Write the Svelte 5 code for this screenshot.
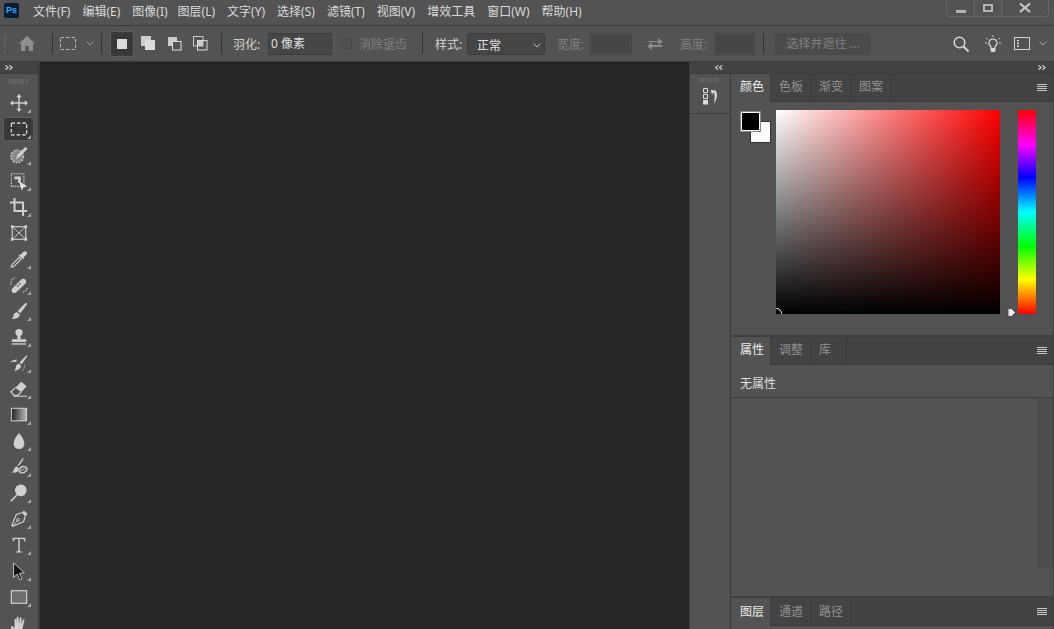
<script lang="ts">
  const menus = ['文件(F)', '编辑(E)', '图像(I)', '图层(L)', '文字(Y)', '选择(S)', '滤镜(T)', '视图(V)', '增效工具', '窗口(W)', '帮助(H)'];

  const c = '#d0d0d0';
  const tools = [
    { more: true, svg: `<path d="M10 1.5v17M1.5 10h17" stroke="${c}" stroke-width="1.6" fill="none"/><path d="M10 0l3 3.500H7zM10 20l3-3.500H7zM0 10l3.500-3v6zM20 10l-3.500-3v6z" fill="${c}"/>` },
    { more: true, active: true, svg: `<rect x="1.500" y="3.500" width="17" height="13" fill="none" stroke="#eaeaea" stroke-width="1.300" stroke-dasharray="4 2.200"/>` },
    { more: true, svg: `<circle cx="8" cy="11.500" r="7" fill="#8a8a8a" stroke="${c}" stroke-width="1.500" stroke-dasharray="2 1.500"/><path d="M6.500 15l2-5.500 8.500-8.500 2.500 2-8 8.500z" fill="${c}"/>` },
    { more: true, svg: `<rect x="1.500" y="2" width="14" height="14" fill="none" stroke="#ddd" stroke-width="1.200" stroke-dasharray="1.500 1.300"/><path d="M5 5h7v7H9V8H5z" fill="${c}"/><path d="M10 10l9 6-4 1-2 3.500z" fill="#e0e0e0"/>` },
    { more: true, svg: `<path d="M5 0v14.500h14M0 5h14.500v15" fill="none" stroke="${c}" stroke-width="2.200"/>` },
    { more: false, svg: `<rect x="2.500" y="3" width="15" height="14" fill="none" stroke="${c}" stroke-width="1.300"/><path d="M2.500 3l15 14M17.500 3l-15 14" stroke="${c}"/><path d="M1 1.500h3v3H1zM16 1.500h3v3h-3zM1 15.500h3v3H1zM16 15.500h3v3h-3z" fill="${c}"/>` },
    { more: true, svg: `<path d="M2 16.500L10.500 8l2 2-8.500 8.500-2.500.5z" fill="none" stroke="${c}" stroke-width="1.300"/><path d="M9.500 5.500l2.500-.5 3-3q2-1.500 3.200 0t0 3L15.500 8l-.5 2.500z" fill="${c}"/>` },
    { more: true, svg: `<path d="M2.500 14L12.500 4q2.500-2 4.500 0t0 4.500L7 18q-2.500 2-4.500 0t0-4z" fill="${c}"/><circle cx="8.500" cy="11" r="1" fill="#535353"/><circle cx="11" cy="9" r="1" fill="#535353"/><path d="M1 10Q.5 4 6 1.500M14.500 18q3.500-1 5-5" fill="none" stroke="${c}" stroke-width="1.200" stroke-dasharray="1.500 1.200"/>` },
    { more: true, svg: `<path d="M18.500 1q1 .5.500 1.500L11.500 12.500 8.500 10 17 1.500z" fill="${c}"/><path d="M7.500 11l3.500 3q-1 5-9.500 5 3-2 2.500-4.500.5-2.500 3.500-3.500z" fill="${c}"/>` },
    { more: true, svg: `<circle cx="10" cy="5" r="4" fill="${c}"/><path d="M8.500 8h3l.5 4.500H8z" fill="${c}"/><path d="M2 12.500h16V15.500H2z" fill="${c}"/><path d="M2 17h16v1.500H2z" fill="${c}"/>` },
    { more: true, svg: `<path d="M18.500 1.500q.8.500.5 1.200L13 11.500 10.500 9.500zM9.500 10.500l3 2.500q-1 5-8 5.500 2.500-2 2-4.500.5-2.500 3-3.500z" fill="${c}"/><path d="M0 9.500q3-4 7.500-3L7 9q-3-1-7 .5z" fill="${c}"/><path d="M16 12q1 4-3 6.500" fill="none" stroke="${c}" stroke-dasharray="1.500 1"/>` },
    { more: true, svg: `<path d="M12.500 2l6 5-6 6.500L6 8.500z" fill="${c}"/><path d="M6 8.500L1 13l3.500 4h4l4-3.500" fill="none" stroke="${c}" stroke-width="1.300"/><path d="M4 18h15" stroke="${c}" stroke-width="1.200"/>` },
    { more: true, svg: `<defs><linearGradient id="gr"><stop offset="0" stop-color="#222"/><stop offset="1" stop-color="#bbb"/></linearGradient></defs><rect x="1.500" y="2.500" width="17" height="14" fill="url(#gr)" stroke="#ddd"/>` },
    { more: true, svg: `<path d="M10 1q6 7 6 12a6 6 0 01-12 0Q4 8 10 1z" fill="${c}"/>` },
    { more: true, svg: `<path d="M14 0q1.500.5 1 1.500L10.500 8 8 9zM7 9.500q3.500 1 2.500 4-1.500 3.500-8 2.500 2.500-1 3-3.500.5-2 2.500-3z" fill="${c}"/><ellipse cx="14.500" cy="13" rx="4.500" ry="3.300" transform="rotate(-25 14.500 13)" fill="none" stroke="${c}" stroke-width="1.600"/><path d="M11 15l7-4.500" stroke="${c}"/>` },
    { more: true, svg: `<circle cx="12" cy="7" r="6.500" fill="${c}"/><path d="M8 12L1 19" stroke="${c}" stroke-width="1.800"/>` },
    { more: true, svg: `<path d="M13 3L7 5 2 17l1 1L15 13l2-6" fill="none" stroke="${c}" stroke-width="1.300"/><path d="M13 3l2.500-2.500 4 4L17 7z" fill="${c}"/><path d="M3 18l5-6" stroke="${c}"/><circle cx="9" cy="11" r="1.600" fill="none" stroke="${c}"/>` },
    { more: true, svg: `<path d="M3 2h14v4.500h-.8Q16 3.200 13.500 3.200h-2.700V16q0 1.300 2.500 1.300v1H6.700v-1q2.500 0 2.500-1.300V3.200H6.500Q4 3.200 3.800 6.500H3z" fill="${c}"/>` },
    { more: true, svg: `<path d="M4 1l12 11-5.500.5 3 6.500-2.500 1-3-6.500L4 17z" fill="#111" stroke="${c}" stroke-width="1"/>` },
    { more: true, svg: `<rect x="1.500" y="3" width="17" height="14" fill="#6e6e6e" stroke="${c}" stroke-width="1.300"/>` },
    { more: false, svg: `<path d="M5 21Q2 17 .5 14q1-1.500 2.500 0L5 15.500V6q1.300-1.500 2 0v5l.5-7.500q1.300-1.300 2 0L10 11l1-7q1.300-1 2 .5L12.500 11l2-5q1.300-.5 1.700 1L14 15q0 3-1 6z" fill="${c}"/>` },
  ];
</script>

{#snippet chevrons(right: boolean)}
  <svg class="dbl" width="8" height="5" viewBox="0 0 9 7" preserveAspectRatio="none">
    <path d={right ? 'M.5.5L3.500 3.500.5 6.500M5 .5L8 3.500 5 6.500' : 'M3.500.5L.5 3.500l3 3M8 .5L5 3.500l3 3'} fill="none" stroke="#e0e0e0" stroke-width="1.400"/>
  </svg>
{/snippet}

<div class="app">
  <header class="menubar">
    <div class="logo">Ps</div>
    <nav class="menus">
      {#each menus as m}
        <span class="menu" class:tight={m === '图像(I)'}>{m}</span>
      {/each}
    </nav>
    <div class="winbtns">
      <div class="win w1"><span class="min"></span></div>
      <div class="win w2"><span class="max"></span></div>
      <div class="win w3">
        <svg width="12" height="10" viewBox="0 0 12 10"><path d="M1 .5l10 8.500M11 .5L1 9" stroke="#c4c4c4" stroke-width="2.200"/></svg>
      </div>
    </div>
  </header>

  <div class="options">
    <div class="grip"></div>
    <svg class="home" width="16" height="15" viewBox="0 0 16 15"><path d="M8 0l8 7.500h-2V15H9.800v-5H6.200v5H2V7.500H0z" fill="#8f8f8f"/></svg>
    <i class="sep s1"></i>
    <svg class="marq" width="17" height="14" viewBox="0 0 17 14"><rect x=".5" y=".5" width="15" height="12" fill="none" stroke="#b4b4b4" stroke-dasharray="3.500 2"/></svg>
    <svg class="chev c1" width="8" height="5" viewBox="0 0 8 5"><path d="M.5.500L4 4 7.500.500" fill="none" stroke="#999"/></svg>
    <i class="sep s2"></i>
    <div class="mode on"><span class="sq"></span></div>
    <svg class="mode-ic m1" width="15" height="15" viewBox="0 0 15 15"><rect width="10" height="10" fill="#ccc"/><rect x="4" y="4" width="10" height="10" fill="#ddd"/></svg>
    <svg class="mode-ic m2" width="14" height="14" viewBox="0 0 14 14"><rect width="9" height="9" fill="#ccc"/><rect x="4.500" y="4.500" width="8.500" height="8.500" fill="#535353" stroke="#ddd"/></svg>
    <svg class="mode-ic m3" width="15" height="15" viewBox="0 0 15 15"><rect x=".5" y=".5" width="9.500" height="9.500" fill="none" stroke="#ccc"/><rect x="4.500" y="4.500" width="9.500" height="9.500" fill="none" stroke="#ddd"/><rect x="4.500" y="4.500" width="5.500" height="5.500" fill="#ccc"/></svg>
    <i class="sep s3"></i>
    <span class="lbl feather">羽化:</span>
    <div class="input fe">0 像素</div>
    <span class="check"></span>
    <span class="lbl dim anti">消除锯齿</span>
    <i class="sep s4"></i>
    <span class="lbl style">样式:</span>
    <div class="select">正常
      <svg width="8" height="5" viewBox="0 0 8 5"><path d="M.5.500L4 4 7.500.500" fill="none" stroke="#c0c0c0"/></svg>
    </div>
    <span class="lbl dim wd">宽度:</span>
    <div class="box bw"></div>
    <svg class="swap" width="16" height="13" viewBox="0 0 16 13"><path d="M1 4h10V1l5 3.500L11 8V5H1zM15 8H5V5L0 9.500 5 13v-3h10z" fill="#8a8a8a"/></svg>
    <span class="lbl dim ht">高度:</span>
    <div class="box bh"></div>
    <i class="sep s5"></i>
    <div class="mask">选择并遮住 ...</div>
    <svg class="search" width="16" height="16" viewBox="0 0 16 16"><circle cx="6.500" cy="6.500" r="5.300" fill="none" stroke="#d4d4d4" stroke-width="1.500"/><path d="M10.500 10.500L15.500 15.500" stroke="#d4d4d4" stroke-width="2"/></svg>
    <svg class="bulb" width="16" height="18" viewBox="0 0 16 18"><path d="M8 4a4 4 0 00-2 7.500V15h4v-3.500A4 4 0 008 4z" fill="none" stroke="#d4d4d4" stroke-width="1.200"/><path d="M6 13h4v4H6z" fill="#d4d4d4"/><path d="M8 0v2M1 3l1.500 1.300M15 3l-1.500 1.300M0 8h2M14 8h2" stroke="#d4d4d4"/></svg>
    <svg class="work" width="16" height="13" viewBox="0 0 16 13"><rect x=".5" y=".5" width="15" height="12" fill="none" stroke="#d4d4d4"/><path d="M3 3h2v1.500H3zM3 5.700h2v1.500H3zM3 8.400h2v1.500H3z" fill="#d4d4d4"/></svg>
    <svg class="chev c2" width="8" height="5" viewBox="0 0 8 5"><path d="M.5.500L4 4 7.500.500" fill="none" stroke="#a8a8a8"/></svg>
  </div>

  <div class="main">
    <aside class="toolbar">
      <div class="strip lstrip">{@render chevrons(true)}</div>
      <div class="tgrip"></div>
      <div class="tools">
        {#each tools as t}
          <div class="tool" class:active={t.active}>
            <svg width="18" height="18" viewBox="0 0 20 20">{@html t.svg}</svg>
            {#if t.more}<span class="corner"></span>{/if}
          </div>
        {/each}
      </div>
    </aside>

    <div class="canvas"></div>

    <div class="right">
      <div class="strip rstrip">{@render chevrons(false)}{@render chevrons(true)}</div>
      <div class="right-body">
        <div class="dock">
          <div class="dgrip"></div>
          <div class="dock-btn">
            <svg width="18" height="18" viewBox="0 0 18 18">
              <path d="M2.500 1.500h4v4h-4zM2.500 7.500h4v4h-4z" fill="none" stroke="#dcdcdc"/><path d="M2 13h5v4.500H2z" fill="#dcdcdc"/>
              <path d="M9.500 3l5 .5q3 4.500 0 10.500l-1.500 2q1.500-6 .2-10.500l-1.700.5v2.500z" fill="#dcdcdc"/>
            </svg>
          </div>
        </div>

        <div class="panels">
          <section class="panel color">
            <div class="tabs">
              <span class="tab on">颜色</span><span class="tab">色板</span><span class="tab">渐变</span><span class="tab">图案</span>
              <span class="burger"></span>
            </div>
            <div class="picker">
              <div class="swatches"><span class="bg"></span><span class="fg"></span></div>
              <div class="field"><span class="dot"></span></div>
              <div class="hue-wrap">
                <svg class="hue-mark" width="9" height="9" viewBox="0 0 9 9"><path d="M1 1.500Q1 .5 2 .5h2.500L8.500 4.500 4.500 8.500H2Q1 8.500 1 7.500z" fill="#f0f0f0" stroke="#333" stroke-width=".8"/></svg>
                <div class="hue"></div>
              </div>
            </div>
          </section>

          <section class="panel props">
            <div class="tabs">
              <span class="tab on">属性</span><span class="tab">调整</span><span class="tab short">库</span>
              <span class="burger"></span>
            </div>
            <div class="noprops">无属性</div>
            <div class="propbody"><div class="scrolltrack"></div></div>
          </section>

          <section class="panel layers">
            <div class="tabs">
              <span class="tab on">图层</span><span class="tab">通道</span><span class="tab">路径</span>
              <span class="burger"></span>
            </div>
          </section>
        </div>
      </div>
    </div>
  </div>
</div>

<style>
  :global(body) { margin: 0; background: #535353; }
  .app {
    width: 1054px; height: 629px; overflow: hidden;
    display: flex; flex-direction: column;
    background: #535353; color: #d6d6d6;
    font: 12px "Noto Sans", "Noto Sans CJK SC", sans-serif;
  }

  .menubar {
    height: 25px; flex-shrink: 0; display: flex; align-items: flex-start;
    border-bottom: 1px solid #3c3c3c;
  }
  .logo {
    width: 15px; height: 15px; margin: 3px 0 0 4px; border-radius: 2px;
    background: #001e36; color: #31a8ff; font: bold 9px/15px "Liberation Sans", sans-serif;
    text-align: center;
  }
  .menus { display: flex; gap: 12px; margin-left: 14px; line-height: 24px; white-space: nowrap; }
  .menu { color: #dadada; }
  .menu.tight { margin-right: -2px; }
  .winbtns {
    display: flex; margin-left: auto; margin-right: 5px; height: 16px;
    border: 1px solid #666; border-top: none; border-radius: 0 0 4px 4px;
  }
  .win { display: flex; align-items: center; justify-content: center; border-right: 1px solid #666; }
  .w1 { width: 27px; }
  .w2 { width: 26px; }
  .w3 { width: 46px; border-right: none; }
  .min { width: 10px; height: 3px; margin-top: 6px; background: #b4b4b4; }
  .max { width: 6px; height: 4px; border: 2px solid #b4b4b4; }

  .options {
    height: 35px; flex-shrink: 0; display: flex; align-items: center;
    border-bottom: 1px solid #3a3a3a; white-space: nowrap;
  }
  .grip {
    width: 2px; height: 18px; margin-left: 4px;
    background: repeating-linear-gradient(#6a6a6a 0 1px, transparent 1px 2px);
  }
  .home { margin-left: 13px; }
  .sep { width: 1px; height: 21px; background: #333; flex-shrink: 0; }
  .s1 { margin-left: 17px; }
  .marq { margin-left: 7px; }
  .c1 { margin-left: 9px; }
  .s2 { margin-left: 7px; }
  .mode {
    width: 24px; height: 26px; margin-left: 8px; display: flex; align-items: center; justify-content: center;
    background: #383838; border: 1px solid #5f5f5f; border-radius: 3px; box-sizing: border-box;
  }
  .sq { width: 10px; height: 10px; background: #dcdcdc; }
  .m1 { margin-left: 7px; }
  .m2 { margin-left: 12px; }
  .m3 { margin-left: 11px; }
  .s3 { margin-left: 13px; }
  .lbl { color: #d2d2d2; }
  .lbl.dim { color: #808080; }
  .feather { margin-left: 11px; width: 35px; }
  .input {
    width: 64px; height: 22px; box-sizing: border-box; padding-left: 2px; line-height: 20px;
    background: #454545; border: 1px solid #3c3c3c; color: #e0e0e0;
  }
  .check {
    width: 11px; height: 11px; margin-left: 9px; box-sizing: border-box;
    border: 1px solid #4a4a4a; border-radius: 2px; background: #505050;
  }
  .anti { margin-left: 7px; width: 48px; }
  .s4 { margin-left: 15px; }
  .style { margin-left: 12px; width: 32px; }
  .select {
    width: 78px; height: 22px; margin-top: 1px; box-sizing: border-box; padding: 2px 3px 0 9px;
    display: flex; align-items: center; justify-content: space-between;
    background: #454545; border: 1px solid #3c3c3c; border-radius: 3px; color: #e4e4e4;
  }
  .wd { margin-left: 12px; width: 33px; }
  .box { height: 22px; box-sizing: border-box; background: #454545; border: 2px solid #4d4d4d; outline: 1px solid #474747; outline-offset: -1px; }
  .bw { width: 42px; }
  .swap { margin-left: 15px; }
  .ht { margin-left: 17px; width: 34px; }
  .bh { width: 41px; }
  .s5 { margin-left: 8px; }
  .mask {
    width: 96px; height: 22px; margin-left: 11px; text-align: center; line-height: 22px; box-sizing: border-box;
    background: #4b4b4b; border-radius: 3px; color: #808080;
  }
  .search { margin-left: 82px; }
  .bulb { margin-left: 16px; }
  .work { margin-left: 13px; }
  .c2 { margin-left: 9px; }

  .main { flex: 1; display: flex; min-height: 0; }
  .strip { height: 11px; background: #434343; border-bottom: 1px solid #3a3a3a; display: flex; align-items: center; }
  .dbl { display: block; }

  .toolbar { width: 38px; flex-shrink: 0; border-right: 2px solid #3a3a3a; }
  .lstrip { padding-left: 5px; }
  .tgrip {
    width: 20px; height: 5px; margin: 5px 0 0 9px;
    background: repeating-linear-gradient(90deg, #6a6a6a 0 1px, transparent 1px 2px);
  }
  .tools { margin-top: 6px; display: flex; flex-direction: column; }
  .tool {
    position: relative; height: 24px; width: 31px; margin: 1px 0 1px 3px; display: flex; align-items: center; justify-content: center;
    box-sizing: border-box; border-radius: 3px; border: 1px solid transparent;
  }
  .tool.active { background: #383838; border-color: #5f5f5f; }
  .corner {
    position: absolute; right: 2px; bottom: 1px; width: 0; height: 0;
    border-left: 4px solid transparent; border-bottom: 4px solid #a8a8a8;
  }

  .canvas { width: 649px; flex-shrink: 0; background: #262626; }

  .right { flex: 1; display: flex; flex-direction: column; border-left: 1px solid #3a3a3a; min-width: 0; }
  .rstrip { justify-content: space-between; padding: 0 8px 0 25px; }
  .right-body { flex: 1; display: flex; min-height: 0; }
  .dock { width: 40px; flex-shrink: 0; border-right: 1px solid #3a3a3a; }
  .dgrip {
    width: 20px; height: 4px; margin: 4px 0 0 9px;
    background: repeating-linear-gradient(90deg, #6a6a6a 0 1px, transparent 1px 2px);
  }
  .dock-btn {
    height: 32px; padding-bottom: 4px; box-sizing: border-box; display: flex; align-items: center; justify-content: center;
    border-bottom: 1px solid #3f3f3f;
  }

  .panels { flex: 1; display: flex; flex-direction: column; min-width: 0; border-right: 1px solid #3f3f3f; }
  .panel { display: flex; flex-direction: column; border-bottom: 2px solid #3f3f3f; }
  .tabs { height: 28px; display: flex; flex-shrink: 0; position: relative; background: #434343; border-bottom: 1px solid #3a3a3a; box-sizing: border-box; }
  .tab {
    width: 31px; padding-left: 8px; border-right: 1px solid #3a3a3a; line-height: 26px; color: #929292;
  }
  .tab.short { width: 27px; }
  .tab.on { width: 30px; padding-left: 9px; background: #535353; color: #ededed; height: 28px; }
  .burger {
    position: absolute; right: 6px; top: 10px; width: 10px; height: 7px;
    background: repeating-linear-gradient(#c8c8c8 0 1px, transparent 1px 2px);
  }
  .color { height: 263px; box-sizing: border-box; flex-shrink: 0; }
  .picker { display: flex; align-items: flex-start; padding: 8px 0 0 10px; }
  .swatches { position: relative; width: 35px; height: 35px; margin-top: 2px; }
  .fg, .bg { position: absolute; box-sizing: border-box; }
  .fg { left: 0; top: 0; width: 19px; height: 19px; background: #000; border: 1px solid #fff; outline: 1px solid #8a8a8a; }
  .bg { left: 10px; top: 10px; width: 19px; height: 20px; background: #fff; outline: 1px solid #333; }
  .field {
    position: relative; width: 224px; height: 204px; overflow: hidden;
    background: linear-gradient(to top, #000, rgba(0,0,0,0)), linear-gradient(to right, #fff, #f00);
  }
  .dot {
    position: absolute; left: -5px; bottom: -5px; width: 9px; height: 9px; border: 1px solid #fff; border-radius: 50%;
  }
  .hue-wrap { position: relative; margin-left: 18px; }
  .hue {
    width: 18px; height: 204px;
    background: linear-gradient(#f00, #f0f 17%, #00f 33%, #0ff 50%, #0f0 67%, #ff0 83%, #f00);
  }
  .hue-mark { position: absolute; left: -11px; bottom: -3px; }
  .props { flex: 1; min-height: 0; }
  .noprops { height: 33px; line-height: 38px; padding-left: 9px; flex-shrink: 0; color: #dedede; border-bottom: 1px solid #3f3f3f; box-sizing: border-box; }
  .propbody { flex: 1; display: flex; justify-content: flex-end; }
  .scrolltrack { width: 16px; height: 170px; background: #4d4d4d; }
  .layers { height: 31px; flex-shrink: 0; border-bottom: none; }
  .layers .tab { line-height: 28px; }
</style>
